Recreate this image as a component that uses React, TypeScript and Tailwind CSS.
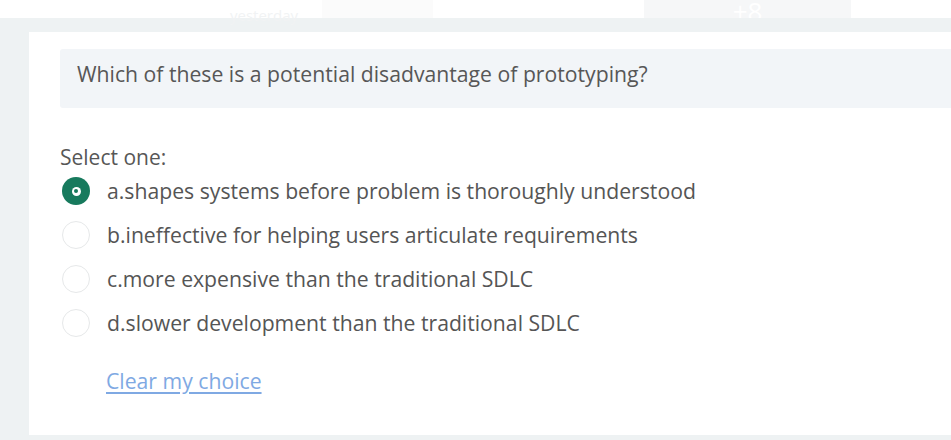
import React from 'react';

const options = [
  'a.shapes systems before problem is thoroughly understood',
  'b.ineffective for helping users articulate requirements',
  'c.more expensive than the traditional SDLC',
  'd.slower development than the traditional SDLC',
];

const Radio: React.FC<{ checked: boolean }> = ({ checked }) =>
  checked ? (
    <span className="flex h-[28px] w-[28px] shrink-0 items-center justify-center rounded-full bg-[#177a5d]">
      <span className="flex h-[9px] w-[9px] items-center justify-center rounded-full bg-white">
        <span className="h-[4px] w-[4px] rounded-full bg-[#177a5d]" />
      </span>
    </span>
  ) : (
    <span className="h-[28px] w-[28px] shrink-0 rounded-full border border-[#e6e8e9] bg-white" />
  );

export default function App() {
  return (
    <div className="h-[440px] w-[951px] overflow-hidden bg-[#eef2f3] font-['Open_Sans',sans-serif]">
      {/* faded header strip */}
      <div className="flex h-[18px] items-end bg-white">
        <span className="ml-[230px] text-[15px] leading-[15px] text-[#f1f3f4] translate-y-[5px]">yesterday</span>
        <div className="ml-[24px] h-[18px] w-[111px] bg-[#fbfbfb]" />
        <div className="ml-[211px] flex h-[18px] w-[207px] justify-center overflow-hidden bg-[#f6f7f8]">
          <span className="text-[26px] leading-[26px] text-white translate-y-[-2px]">+8</span>
        </div>
      </div>

      <div className="pt-[14px] pl-[29px]">
        <div className="h-[403px] w-[940px] bg-white pt-[17px] pl-[31px]">
          <div className="flex h-[59px] items-center rounded-l-[3px] bg-[#f2f5f8] pl-[17px] pb-[9px]">
            <p className="text-[21.2px] leading-[28px] text-[#575757]">
              Which of these is a potential disadvantage of prototyping?
            </p>
          </div>

          <div className="mt-[37px] text-[21px] leading-[24px] text-[#575757]">Select one:</div>

          <div className="flex flex-col">
            {options.map((o, i) => (
              <div key={o} className="flex h-[44px] items-center gap-[17px] pl-[2px]">
                <Radio checked={i === 0} />
                <span className="text-[21.2px] leading-[28px] text-[#555]">{o}</span>
              </div>
            ))}
          </div>

          <div className="mt-[22px] pl-[46px] leading-[28px]">
            <a className="text-[21.2px] leading-[28px] text-[#7fa9e3] underline underline-offset-[3px]">Clear my choice</a>
          </div>
        </div>
      </div>
    </div>
  );
}
